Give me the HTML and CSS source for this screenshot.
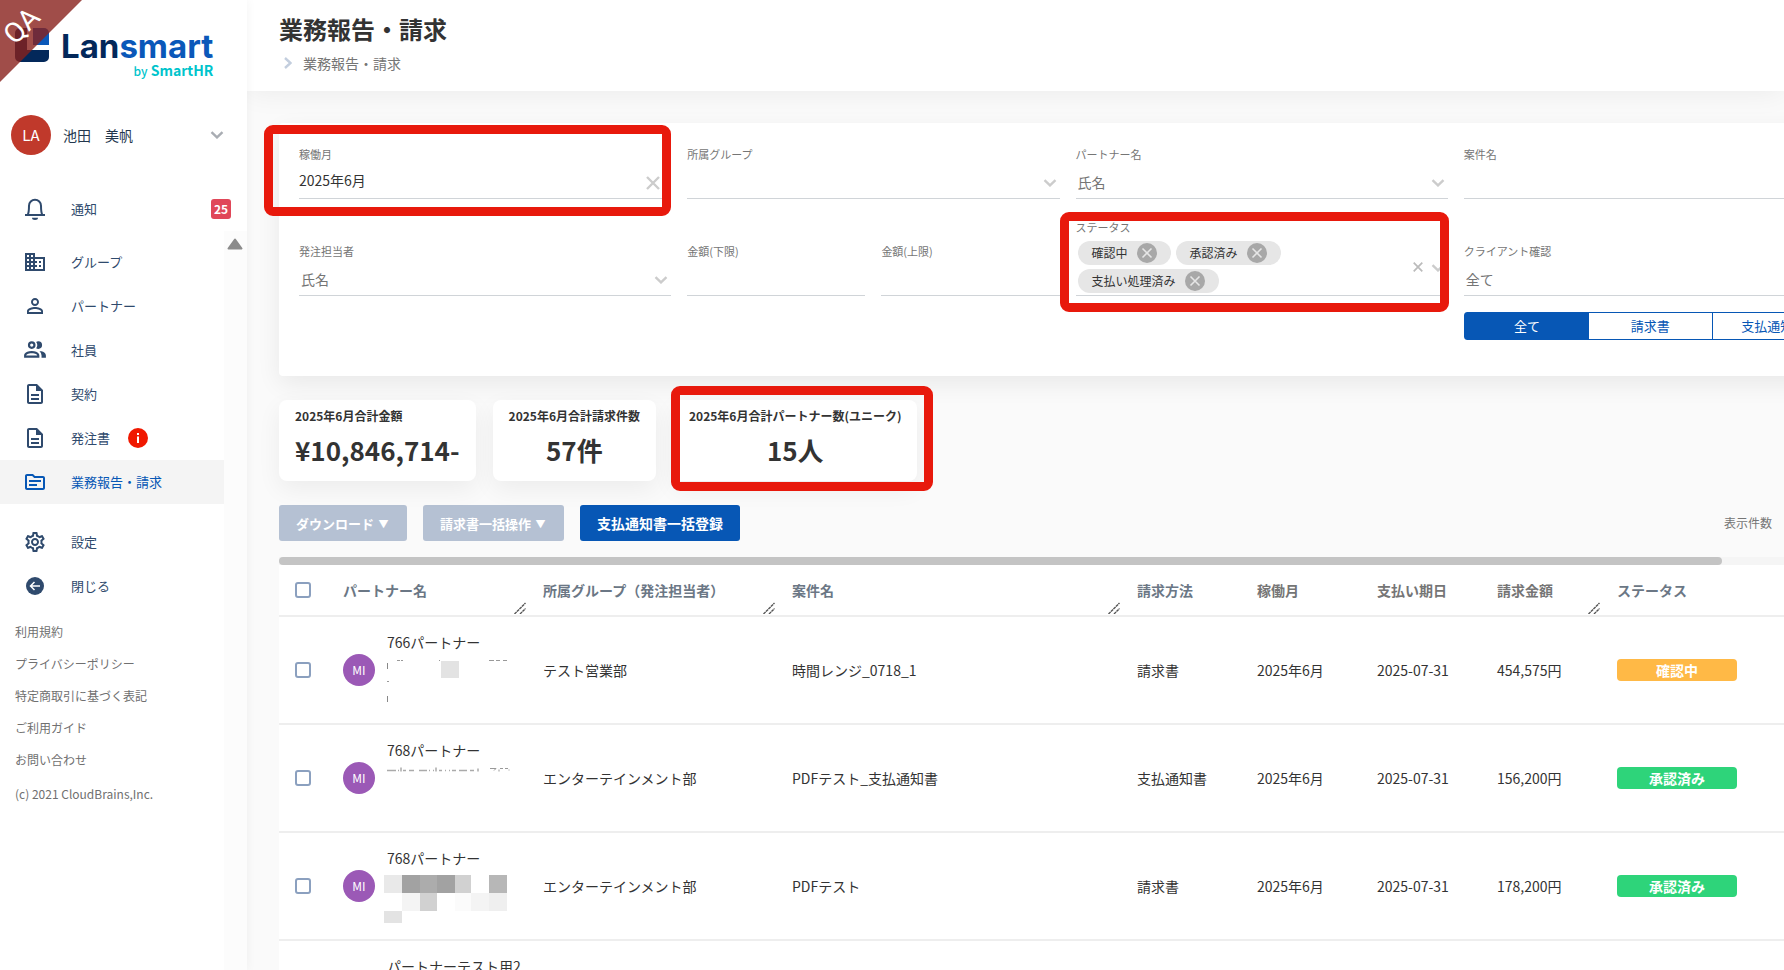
FILE: index.html
```html
<!DOCTYPE html>
<html lang="ja">
<head>
  <meta charset="UTF-8" />
  <meta name="viewport" content="width=device-width, initial-scale=1.0"/>
  <title>業務報告・請求 | Lansmart</title>
  <link rel="stylesheet" href="styles.css">
</head>
<body>
  <!-- shared icons -->
  <svg class="sprite" aria-hidden="true">
    <symbol id="i-chevron" viewBox="0 0 14 8"><path d="M1.5 1.2 7 6.4l5.5-5.2" fill="none" stroke="currentColor" stroke-width="2.400"/></symbol>
    <symbol id="i-close" viewBox="0 0 14 14"><path d="M1 1l12 12M13 1 1 13" fill="none" stroke="currentColor" stroke-width="2.400"/></symbol>
    <symbol id="i-chip" viewBox="0 0 20 20"><circle cx="10" cy="10" r="10" fill="#a8a8a8"/><path d="M5.5 5.5l9 9M14.5 5.5l-9 9" fill="none" stroke="#e6e6e6" stroke-width="1.6"/></symbol>
    <symbol id="i-doc" viewBox="0 0 24 24"><path d="M8 16h8v2H8zm0-4h8v2H8zm6-10H6c-1.1 0-2 .9-2 2v16c0 1.1.89 2 1.99 2H18c1.1 0 2-.9 2-2V8l-6-6zm4 18H6V4h7v5h5v11z"/></symbol>
    <symbol id="i-resize" viewBox="0 0 12 12"><path d="M.5 12 11.5 1M6 12l5.5-5.5" fill="none" stroke="#555" stroke-width="1.4" stroke-dasharray="3 .5"/></symbol>
  </svg>

  <aside class="sidebar">
    <div class="ribbon"><span>QA</span></div>
    <a class="logo" href="#">
      <svg class="logo-mark" viewBox="0 0 34 34">
        <path d="M5 0h7v17h22v0H12v5h22v7a5 5 0 0 1-5 5H5a5 5 0 0 1-5-5V5a5 5 0 0 1 5-5z" fill="#03285a"/>
        <path d="M18 0h11a5 5 0 0 1 5 5v12H18z" fill="#0a58b9"/>
      </svg>
      <span class="logo-text">
        <span class="logo-name">Lan<b>smart</b></span>
        <span class="logo-by"><small>by</small> SmartHR</span>
      </span>
    </a>

    <button class="user" type="button">
      <span class="user-avatar">LA</span>
      <span class="user-name">池田　美帆</span>
      <svg class="chevron"><use href="#i-chevron"/></svg>
    </button>

    <a class="nav-item notice" href="#">
      <svg class="nav-icon" viewBox="0 0 24 24"><path d="M2 18h20M4.6 18C6 15.500 6 12.500 6 8.700a6 6 0 0 1 12 0c0 3.800 0 6.800 1.400 9.300" fill="none" stroke="currentColor" stroke-width="2"/><path d="M9 20.800h6a3 2.200 0 0 1-6 0z"/></svg>
      通知
      <span class="count">25</span>
    </a>

    <div class="side-scroll">
      <nav class="nav">
        <a class="nav-item" href="#">
          <svg class="nav-icon" viewBox="0 0 24 24"><path d="M12 7V3H2v18h20V7H12zM6 19H4v-2h2v2zm0-4H4v-2h2v2zm0-4H4V9h2v2zm0-4H4V5h2v2zm4 12H8v-2h2v2zm0-4H8v-2h2v2zm0-4H8V9h2v2zm0-4H8V5h2v2zm10 12h-8v-2h2v-2h-2v-2h2v-2h-2V9h8v10zm-2-8h-2v2h2v-2zm0 4h-2v2h2v-2z"/></svg>
          グループ
        </a>
        <a class="nav-item" href="#">
          <svg class="nav-icon" viewBox="0 0 24 24"><path d="M12 5.900a2.100 2.100 0 1 1 0 4.200 2.100 2.100 0 0 1 0-4.200m0 9c2.970 0 6.100 1.460 6.100 2.100v1.100H5.900V17c0-.64 3.130-2.100 6.100-2.100M12 4C9.790 4 8 5.790 8 8s1.790 4 4 4 4-1.790 4-4-1.790-4-4-4zm0 9c-2.670 0-8 1.340-8 4v3h16v-3c0-2.660-5.330-4-8-4z"/></svg>
          パートナー
        </a>
        <a class="nav-item" href="#">
          <svg class="nav-icon people" viewBox="1 2 22 20"><path d="M13.070 10.410A5 5 0 0 0 13.070 4.590 3.390 3.390 0 0 1 15 4a3.500 3.500 0 0 1 0 7 3.390 3.390 0 0 1-1.930-.59M5.500 7.500A3.500 3.500 0 1 1 9 11a3.500 3.500 0 0 1-3.500-3.500m2 0A1.500 1.500 0 1 0 9 6a1.500 1.500 0 0 0-1.500 1.500M16 17v2H2v-2s0-4 7-4 7 4 7 4m-2 0c-.14-.78-1.330-2-5-2s-4.930 1.310-5 2m11.950-4A5.320 5.320 0 0 1 18 17v2h4v-2s0-3.630-6.060-4z"/></svg>
          社員
        </a>
        <a class="nav-item" href="#">
          <svg class="nav-icon"><use href="#i-doc"/></svg>
          契約
        </a>
        <a class="nav-item" href="#">
          <svg class="nav-icon"><use href="#i-doc"/></svg>
          発注書
          <svg class="alert" viewBox="0 0 20 20"><circle cx="10" cy="10" r="10" fill="#f01800"/><path d="M9 5h2v2H9zm0 3.500h2V15H9z" fill="#fff"/></svg>
        </a>
        <a class="nav-item active" href="#">
          <svg class="nav-icon" viewBox="0 0 24 24"><path d="M20 6h-8l-2-2H4c-1.100 0-1.990.9-1.990 2L2 18c0 1.100.9 2 2 2h16c1.100 0 2-.9 2-2V8c0-1.100-.9-2-2-2zm0 12H4V6h5.170l2 2H20v10zm-2-6H6v-2h12v2zm-4 4H6v-2h8v2z"/></svg>
          業務報告・請求
        </a>
      </nav>
      <nav class="nav">
        <a class="nav-item" href="#">
          <svg class="nav-icon" viewBox="0 0 24 24"><path d="M19.430 12.980c.04-.32.07-.64.07-.98 0-.34-.03-.66-.07-.98l2.110-1.650c.19-.15.24-.42.12-.64l-2-3.460a.5.5 0 0 0-.61-.22l-2.490 1c-.52-.4-1.080-.73-1.690-.98l-.38-2.650A.488.488 0 0 0 14 2h-4c-.25 0-.46.18-.49.42l-.38 2.650c-.61.25-1.170.59-1.690.98l-2.490-1a.566.566 0 0 0-.18-.03c-.17 0-.34.09-.43.25l-2 3.460c-.13.22-.07.49.12.64l2.110 1.650c-.04.32-.07.65-.07.98 0 .33.03.66.07.98l-2.110 1.650c-.19.15-.24.42-.12.64l2 3.460a.5.5 0 0 0 .61.22l2.490-1c.52.4 1.080.73 1.690.98l.38 2.650c.03.24.24.42.49.42h4c.25 0 .46-.18.49-.42l.38-2.650c.61-.25 1.170-.59 1.690-.98l2.490 1c.06.02.12.03.18.03.17 0 .34-.09.43-.25l2-3.460c.12-.22.07-.49-.12-.64l-2.110-1.650zm-1.980-1.710c.04.31.05.52.05.73 0 .21-.02.43-.05.73l-.14 1.130.89.7 1.080.84-.7 1.210-1.270-.51-1.040-.42-.9.68c-.43.32-.84.56-1.250.73l-1.060.43-.16 1.130-.2 1.350h-1.400l-.19-1.350-.16-1.130-1.060-.43c-.43-.18-.83-.41-1.230-.71l-.91-.7-1.060.43-1.270.51-.7-1.210 1.080-.84.89-.7-.14-1.130c-.03-.31-.05-.54-.05-.74s.02-.43.05-.73l.14-1.130-.89-.7-1.080-.84.7-1.210 1.270.51 1.040.42.9-.68c.43-.32.84-.56 1.250-.73l1.060-.43.16-1.130.2-1.350h1.390l.19 1.350.16 1.130 1.060.43c.43.18.83.41 1.230.71l.91.7 1.060-.43 1.270-.51.7 1.210-1.070.85-.89.7.14 1.130zM12 8c-2.210 0-4 1.790-4 4s1.790 4 4 4 4-1.790 4-4-1.790-4-4-4zm0 6c-1.100 0-2-.9-2-2s.9-2 2-2 2 .9 2 2-.9 2-2 2z"/></svg>
          設定
        </a>
        <a class="nav-item" href="#">
          <svg class="nav-icon" viewBox="0 0 24 24"><circle cx="12" cy="12" r="9"/><path d="M17 12H8M11.500 8 7.500 12l4 4" fill="none" stroke="#fff" stroke-width="1.500"/></svg>
          閉じる
        </a>
      </nav>
      <div class="side-links">
        <a href="#">利用規約</a>
        <a href="#">プライバシーポリシー</a>
        <a href="#">特定商取引に基づく表記</a>
        <a href="#">ご利用ガイド</a>
        <a href="#">お問い合わせ</a>
        <p>(c) 2021 CloudBrains,Inc.</p>
      </div>
      <svg class="side-up" viewBox="0 0 16 12"><path d="M8 1.500 14.500 10.500h-13z" fill="#8b8b8b" stroke="#8b8b8b" stroke-width="2" stroke-linejoin="round"/></svg>
    </div>
  </aside>

  <main class="main">
    <header class="page-head">
      <h1>業務報告・請求</h1>
      <p class="crumb">
        <svg viewBox="0 0 8 12"><path d="M1 1l5.500 5L1 11" fill="none" stroke="#c3cede" stroke-width="2.400"/></svg>
        業務報告・請求
      </p>
    </header>

    <div class="content">
      <form class="filters">
        <div class="field">
          <label for="month">稼働月</label>
          <input class="filled" id="month" type="text" value="2025年6月">
          <svg class="clear"><use href="#i-close"/></svg>
          <span class="mark mark-month"></span>
        </div>
        <div class="field">
          <label for="group">所属グループ</label>
          <select id="group"><option></option></select>
          <svg class="chevron"><use href="#i-chevron"/></svg>
        </div>
        <div class="field">
          <label for="partner">パートナー名</label>
          <select id="partner"><option>氏名</option></select>
          <svg class="chevron"><use href="#i-chevron"/></svg>
        </div>
        <div class="field">
          <label for="project">案件名</label>
          <input id="project" type="text">
        </div>

        <div class="field">
          <label for="owner">発注担当者</label>
          <select id="owner"><option>氏名</option></select>
          <svg class="chevron"><use href="#i-chevron"/></svg>
        </div>
        <div class="field-pair">
          <div class="field">
            <label for="min">金額(下限)</label>
            <input id="min" type="text">
          </div>
          <div class="field">
            <label for="max">金額(上限)</label>
            <input id="max" type="text">
          </div>
        </div>
        <div class="field">
          <span class="label">ステータス</span>
          <div class="chips">
            <span class="chip">確認中<svg><use href="#i-chip"/></svg></span>
            <span class="chip">承認済み<svg><use href="#i-chip"/></svg></span>
            <span class="chip">支払い処理済み<svg><use href="#i-chip"/></svg></span>
          </div>
          <svg class="clear-chips"><use href="#i-close"/></svg>
          <svg class="chevron mid"><use href="#i-chevron"/></svg>
          <span class="mark mark-status"></span>
        </div>
        <div class="field">
          <label for="client">クライアント確認</label>
          <select id="client"><option>全て</option></select>
          <svg class="chevron"><use href="#i-chevron"/></svg>
        </div>

        <div class="segmented">
          <button class="on" type="button">全て</button>
          <button type="button">請求書</button>
          <button type="button">支払通知書</button>
        </div>
      </form>

      <section class="stats">
        <div class="stat">
          <h2>2025年6月合計金額</h2>
          <p>¥10,846,714-</p>
        </div>
        <div class="stat">
          <h2>2025年6月合計請求件数</h2>
          <p>57件</p>
        </div>
        <div class="stat">
          <h2>2025年6月合計パートナー数(ユニーク)</h2>
          <p>15人</p>
          <span class="mark mark-stat"></span>
        </div>
      </section>

      <div class="toolbar">
        <button class="btn" type="button" disabled>ダウンロード <span class="caret">▼</span></button>
        <button class="btn" type="button" disabled>請求書一括操作 <span class="caret">▼</span></button>
        <button class="btn primary" type="button">支払通知書一括登録</button>
        <label class="per-page" for="per-page">表示件数</label>
        <select class="per-page-select" id="per-page"><option>20</option></select>
      </div>

      <div class="h-scroll"><div class="h-thumb"></div></div>

      <table class="list">
        <colgroup>
          <col class="c-check"><col class="c-partner"><col class="c-group"><col class="c-project">
          <col class="c-std"><col class="c-std"><col class="c-std"><col class="c-std"><col>
        </colgroup>
        <thead>
          <tr>
            <th class="check"><input type="checkbox" aria-label="全て選択"></th>
            <th>パートナー名<svg class="resize"><use href="#i-resize"/></svg></th>
            <th>所属グループ（発注担当者）<svg class="resize"><use href="#i-resize"/></svg></th>
            <th>案件名<svg class="resize"><use href="#i-resize"/></svg></th>
            <th>請求方法</th>
            <th class="plain">稼働月</th>
            <th class="plain">支払い期日</th>
            <th class="plain">請求金額<svg class="resize"><use href="#i-resize"/></svg></th>
            <th>ステータス</th>
          </tr>
        </thead>
        <tbody>
          <tr>
            <td class="check"><input type="checkbox" aria-label="766パートナー"></td>
            <td>
              <div class="partner">
                <span class="avatar">MI</span>
                <div class="partner-text">
                  766パートナー
                  <svg class="masked" viewBox="0 -1 128 56">
                    <path d="M58 9h18v17H58z" fill="#e3e3e3"/>
                    <path d="M4.500 11v6M4.500 44v6" stroke="#888"/>
                    <path d="M14 8.500h3m1 0h2M56 8.500h1M106 8.500h5m2 0h4m3 0h4M4 29.500h2" stroke="#999"/>
                  </svg>
                </div>
              </div>
            </td>
            <td>テスト営業部</td>
            <td>時間レンジ_0718_1</td>
            <td>請求書</td>
            <td>2025年6月</td>
            <td>2025-07-31</td>
            <td>454,575円</td>
            <td><span class="badge checking">確認中</span></td>
          </tr>
          <tr>
            <td class="check"><input type="checkbox" aria-label="768パートナー"></td>
            <td>
              <div class="partner">
                <span class="avatar">MI</span>
                <div class="partner-text">
                  768パートナー
                  <svg class="masked" viewBox="0 -1 128 56">
                    <path d="M4 10.500h9m2 0h1m2-3v4m2-1h3m3 0h5m5 0h8m2 0h1m3 0h1m2-3v4m3-1h3m3 0h1m3 0h1m2 0h4m3 0h8m3 0h4m4-2v3" fill="none" stroke="#aaa" stroke-width="1.500"/>
                    <path d="M107 8.500h6m-2 2 2-2m4 0h3m-4 1v2m6-3h3m1 1v1" fill="none" stroke="#999"/>
                  </svg>
                </div>
              </div>
            </td>
            <td>エンターテインメント部</td>
            <td>PDFテスト_支払通知書</td>
            <td>支払通知書</td>
            <td>2025年6月</td>
            <td>2025-07-31</td>
            <td>156,200円</td>
            <td><span class="badge approved">承認済み</span></td>
          </tr>
          <tr>
            <td class="check"><input type="checkbox" aria-label="768パートナー"></td>
            <td>
              <div class="partner">
                <span class="avatar">MI</span>
                <div class="partner-text">
                  768パートナー
                  <svg class="masked" viewBox="0 -1 128 56" shape-rendering="crispEdges">
                    <path d="M1 7h18v18H1z" fill="#e9e9e9"/>
                    <path d="M19 7h18v18H19zM54 7h18v18H54z" fill="#a2a2a2"/>
                    <path d="M37 7h17v18H37z" fill="#acacac"/>
                    <path d="M72 7h16v18H72zM37 25h17v18H37z" fill="#d1d1d1"/>
                    <path d="M106 7h18v18h-18z" fill="#b7b7b7"/>
                    <path d="M19 25h18v18H19zM88 25h18v18H88z" fill="#f4f4f4"/>
                    <path d="M72 25h16v18H72z" fill="#fbfbfb"/>
                    <path d="M106 25h18v18h-18z" fill="#efefef"/>
                    <path d="M1 43h18v12H1z" fill="#e3e3e3"/>
                  </svg>
                </div>
              </div>
            </td>
            <td>エンターテインメント部</td>
            <td>PDFテスト</td>
            <td>請求書</td>
            <td>2025年6月</td>
            <td>2025-07-31</td>
            <td>178,200円</td>
            <td><span class="badge approved">承認済み</span></td>
          </tr>
          <tr>
            <td class="check"><input type="checkbox" aria-label="パートナーテスト用2"></td>
            <td>
              <div class="partner">
                <span class="avatar">MI</span>
                <div class="partner-text">
                  パートナーテスト用2
                  <svg class="masked" viewBox="0 -1 128 56"></svg>
                </div>
              </div>
            </td>
            <td></td>
            <td></td>
            <td></td>
            <td></td>
            <td></td>
            <td></td>
            <td></td>
          </tr>
        </tbody>
      </table>
    </div>
  </main>
</body>
</html>
```
FILE: styles.css
```css
* {
  box-sizing: border-box;
}
body {
  margin: 0;
  display: flex;
  height: 100vh;
  overflow: hidden;
  font-family: 'Noto Sans CJK JP', 'Noto Sans', sans-serif;
  font-size: 14px;
  line-height: 20px;
  color: #333;
  background: #fafafa;
}
h1, h2, p {
  margin: 0;
}
a {
  color: inherit;
  text-decoration: none;
}
button, input, select {
  font-family: inherit;
}
svg {
  flex: none;
}
.sprite {
  position: absolute;
  width: 0;
  height: 0;
}
.chevron {
  width: 14px;
  height: 8px;
  color: #ccc;
}

/* sidebar */
.sidebar {
  position: relative;
  z-index: 2;
  flex: none;
  display: flex;
  flex-direction: column;
  width: 247px;
  background: #fff;
  box-shadow: 0 0 10px rgba(0, 0, 0, 0.05);
}
.ribbon {
  position: absolute;
  top: 0;
  left: 0;
  z-index: 1;
  width: 82px;
  height: 82px;
  background: rgba(136, 32, 27, 0.8);
  clip-path: polygon(0 0, 100% 0, 0 100%);
}
.ribbon span {
  position: absolute;
  top: 12px;
  left: 0;
  width: 44px;
  color: #fff;
  font-family: Roboto, sans-serif;
  font-size: 28px;
  line-height: 28px;
  text-align: center;
  transform: rotate(-45deg);
}
.logo {
  display: flex;
  gap: 12px;
  padding: 28px 0 0 15px;
}
.logo-mark {
  width: 34px;
  height: 34px;
}
.logo-text {
  display: flex;
  flex-direction: column;
  align-items: flex-end;
  padding-top: 1px;
}
.logo-name {
  font-family: Inter, sans-serif;
  font-size: 33px;
  line-height: 34px;
  font-weight: 700;
  color: #03285a;
}
.logo-name b {
  font-weight: 700;
  color: #0a58b9;
}
.logo-by {
  font-size: 14px;
  line-height: 14px;
  font-weight: 700;
  color: #00c4cc;
}
.logo-by small {
  font-size: 12px;
  font-weight: 500;
}
.user {
  display: flex;
  align-items: center;
  gap: 12px;
  margin-top: 37px;
  padding: 0 23px 0 11px;
  border: none;
  background: none;
  color: #23374d;
  font-size: 14px;
}
.user-avatar {
  width: 40px;
  height: 40px;
  border-radius: 50%;
  background: #c0392b;
  color: #fff;
  font-size: 15px;
  line-height: 40px;
}
.user .chevron {
  margin-left: auto;
  color: #a9adb3;
}
.nav-item {
  display: flex;
  align-items: center;
  height: 44px;
  padding-left: 23px;
  color: #2f4a6d;
  font-size: 13px;
}
.nav-icon {
  width: 24px;
  height: 24px;
  margin-right: 24px;
  fill: currentColor;
}
.nav-item.active {
  background: #f4f4f4;
  color: #0757b5;
}
.notice {
  margin-top: 32px;
  padding-right: 16px;
}
.count {
  width: 20px;
  height: 20px;
  margin-left: auto;
  border-radius: 3px;
  background: #e04759;
  color: #fff;
  font-size: 12px;
  font-weight: 700;
  text-align: center;
}
.alert {
  width: 20px;
  height: 20px;
  margin-left: 18px;
}
.side-scroll {
  position: relative;
  flex: 1;
  padding: 9px 23px 0 0;
  background: linear-gradient(to left, #fcfcfc 23px, #fff 23px);
}
.nav + .nav {
  margin-top: 16px;
}
.side-up {
  position: absolute;
  top: 7px;
  right: 4px;
  width: 16px;
  height: 12px;
}
.side-links {
  display: flex;
  flex-direction: column;
  gap: 12px;
  padding: 14px 0 0 15px;
  color: #707070;
  font-size: 12px;
}
.side-links p {
  padding-top: 2px;
}

/* main */
.main {
  flex: 1;
  min-width: 0;
  overflow: hidden;
}
.page-head {
  position: relative;
  height: 91px;
  padding: 13px 32px 0;
  background: #fff;
  box-shadow: 0 0 30px rgba(0, 0, 0, 0.07);
}
.page-head h1 {
  font-size: 24px;
  line-height: 32px;
}
.crumb {
  display: flex;
  align-items: center;
  gap: 11px;
  padding: 8px 0 0 5px;
  color: #757575;
}
.crumb svg {
  width: 8px;
  height: 12px;
}
.content {
  min-width: 1609px;
  padding: 32px 0 0 32px;
}

/* filters */
.filters {
  display: grid;
  grid-template-columns: repeat(4, 1fr);
  align-items: end;
  gap: 20px 16px;
  padding: 23px 20px 36px;
  border-radius: 4px;
  background: #fff;
  box-shadow: 0 8px 24px rgba(0, 0, 0, 0.07);
}
.field {
  position: relative;
  display: flex;
  flex-direction: column;
}
.field-pair {
  display: grid;
  grid-template-columns: 1fr 1fr;
  gap: 16px;
}
.field label, .field .label {
  color: #757575;
  font-size: 11px;
  line-height: 16px;
}
.field input, .field select {
  appearance: none;
  width: 100%;
  height: 37px;
  padding: 4px 0 0 2px;
  border: none;
  border-bottom: 1px solid #d0d4d8;
  border-radius: 0;
  outline: none;
  background: none;
  color: #757575;
  font-size: 14px;
}
.field input.filled {
  padding: 0;
  color: #333;
}
.field > .chevron {
  position: absolute;
  right: 3px;
  bottom: 12px;
}
.field > .chevron.mid {
  bottom: 24px;
}
.clear {
  position: absolute;
  right: 11px;
  bottom: 9px;
  width: 14px;
  height: 14px;
  color: #ccc;
}
.clear-chips {
  position: absolute;
  right: 25px;
  bottom: 24px;
  width: 10px;
  height: 10px;
  color: #bbb;
}
.chips {
  display: flex;
  flex-wrap: wrap;
  gap: 4px 5px;
  padding: 6px 80px 2px 2px;
  border-bottom: 1px solid #d0d4d8;
}
.chip {
  display: flex;
  align-items: center;
  gap: 9px;
  height: 24px;
  padding: 0 14px 0 14px;
  border-radius: 12px;
  background: #e6e6e6;
  font-size: 12px;
}
.chip svg {
  width: 20px;
  height: 20px;
}
.segmented {
  grid-column: 4;
  display: grid;
  grid-template-columns: repeat(3, 1fr);
  height: 28px;
  margin-top: -4px;
  border: 1px solid #0757b5;
  border-radius: 3px;
}
.segmented button {
  padding: 0;
  border: none;
  border-left: 1px solid #0757b5;
  background: none;
  color: #0757b5;
  font-size: 13px;
  line-height: 24px;
}
.segmented button.on {
  background: #0757b5;
  color: #fff;
}

/* red frames drawn over the highlighted areas */
.mark {
  position: absolute;
  border: 9px solid #e8190c;
  border-radius: 9px;
  pointer-events: none;
}
.mark-month {
  inset: -21px 0 -17px -35px;
}
.mark-status {
  inset: -7px -1px -16px -16px;
}
.mark-stat {
  inset: -14px -16px -10px -2px;
}

/* totals */
.stats {
  display: flex;
  gap: 17px;
  margin-top: 24px;
}
.stat {
  position: relative;
  height: 81px;
  padding: 6px 16px 0;
  border-radius: 8px;
  background: #fff;
  box-shadow: 0 8px 24px rgba(0, 0, 0, 0.06);
}
.stat h2 {
  font-size: 12px;
  line-height: 20px;
}
.stat p {
  margin-top: 6px;
  font-size: 26px;
  line-height: 36px;
  font-weight: 700;
  text-align: center;
}

/* toolbar */
.toolbar {
  display: flex;
  align-items: center;
  gap: 16px;
  margin-top: 24px;
}
.btn {
  height: 36px;
  padding: 0 17px;
  border: none;
  border-radius: 3px;
  background: #b5c1d3;
  color: #fff;
  font-size: 13px;
  font-weight: 700;
}
.btn.primary {
  background: #0757b5;
  font-size: 14px;
}
.caret {
  display: inline-block;
  width: 13px;
  font-size: 10px;
  text-align: center;
  vertical-align: 1px;
}
.per-page {
  margin-left: auto;
  color: #757575;
  font-size: 12px;
}
.per-page-select {
  width: 68px;
}

/* table */
.h-scroll {
  height: 8px;
  margin-top: 16px;
  background: #f5f5f5;
}
.h-thumb {
  width: 1443px;
  height: 8px;
  border-radius: 4px;
  background: #c4c4c4;
}
.list {
  width: 100%;
  table-layout: fixed;
  border-spacing: 0;
  background: #fff;
}
.c-check {
  width: 48px;
}
.c-partner {
  width: 200px;
}
.c-group {
  width: 249px;
}
.c-project {
  width: 345px;
}
.c-std {
  width: 120px;
}
.list th, .list td {
  padding: 0 0 0 16px;
  border-bottom: 2px solid #eee;
  text-align: left;
  white-space: nowrap;
}
.list th {
  position: relative;
  height: 52px;
  color: #6b7785;
}
.list th.plain {
  color: #757575;
}
.list td {
  height: 108px;
}
.list input {
  appearance: none;
  display: block;
  width: 16px;
  height: 16px;
  margin: 0;
  border: 2px solid #8ba0bf;
  border-radius: 3px;
  background: #fff;
}
.resize {
  position: absolute;
  right: 1px;
  bottom: 1px;
  width: 12px;
  height: 12px;
}
.partner {
  display: flex;
  align-items: center;
  gap: 12px;
}
.avatar {
  flex: none;
  width: 32px;
  height: 32px;
  border-radius: 50%;
  background: #9b59b6;
  color: #fff;
  font-size: 12px;
  line-height: 32px;
  text-align: center;
}
.partner-text {
  line-height: 18px;
}
.masked {
  display: block;
  width: 128px;
  height: 56px;
  margin-left: -4px;
  overflow: visible;
}
.badge {
  display: block;
  width: 120px;
  height: 22px;
  border-radius: 4px;
  color: #fff;
  font-weight: 700;
  line-height: 22px;
  text-align: center;
}
.badge.checking {
  background: #ffb946;
}
.badge.approved {
  background: #2ed47a;
}
```
